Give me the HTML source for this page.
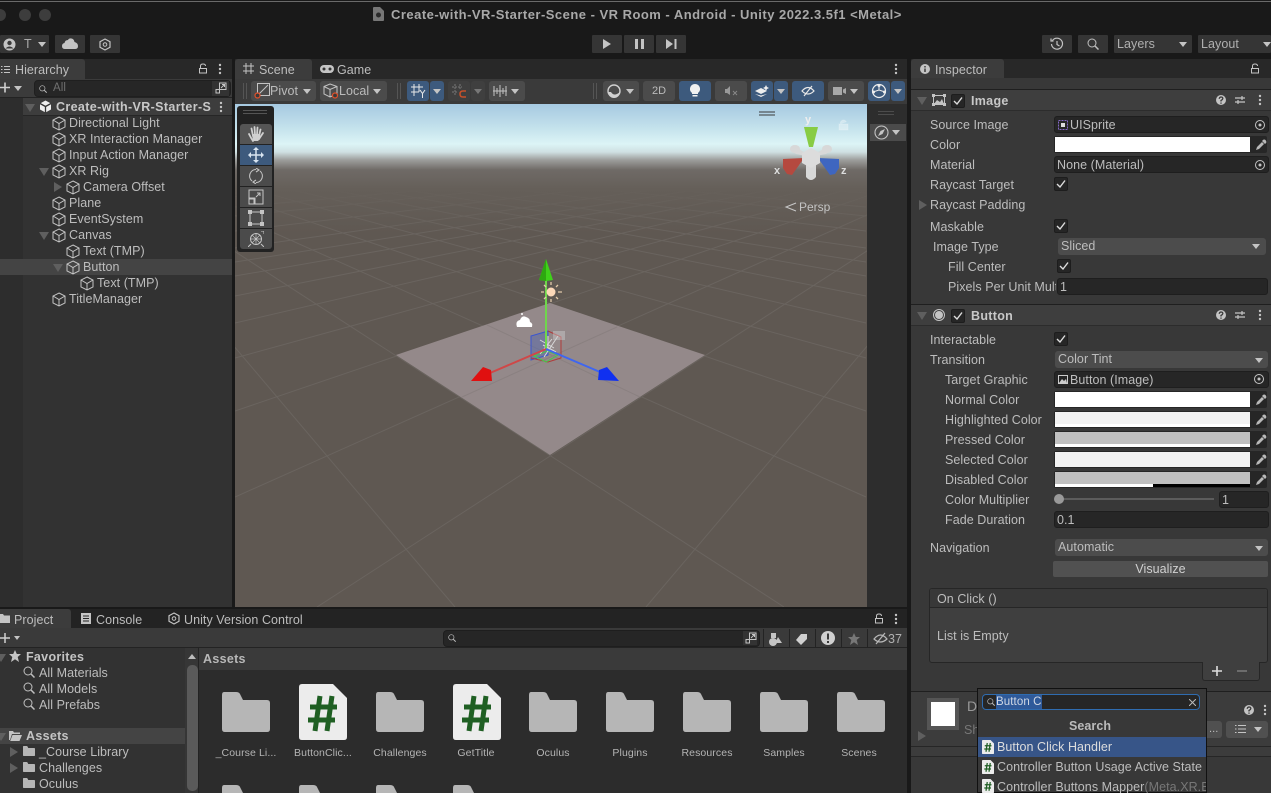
<!DOCTYPE html>
<html><head><meta charset="utf-8"><title>Unity Editor</title>
<style>
html,body{margin:0;padding:0;background:#191919;overflow:hidden;height:793px}
#r{position:relative;width:1271px;height:793px;overflow:hidden;background:#191919;font:12.5px/16px "Liberation Sans",sans-serif;color:#bdbdbd}
#r div,#r svg{position:absolute}
.t{white-space:nowrap;letter-spacing:.06px;height:16px}
.b{font-weight:bold}
.btn{background:#353535;height:18px;top:35px;border-radius:1px}
.tb{background:#4b4b4b;height:20px;top:81px;border-radius:3px}
.bl{background:#3d5a7d;height:20px;top:81px;border-radius:3px}
.f{background:#262626;border:1px solid #1e1e1e;height:15px;border-radius:3px;box-sizing:content-box}
.dd{background:#4c4c4c;height:17px;border-radius:3px}
.c{left:1055px;width:195px;height:14px;background:#fff}
.tri{width:0;height:0;border-left:4px solid transparent;border-right:4px solid transparent;border-top:5px solid #c4c4c4}
.rt{width:0;height:0;border-top:5px solid transparent;border-bottom:5px solid transparent;border-left:8px solid #5f5f5f}
.dn{width:0;height:0;border-left:5px solid transparent;border-right:5px solid transparent;border-top:8px solid #5f5f5f}
.ck{width:12px;height:12px;background:#262626;border:1px solid #1d1d1d;border-radius:2px}
.g line{stroke:#6a645f;stroke-width:1}
.lab{font-size:10.5px;letter-spacing:.1px;text-align:center;width:76px;color:#b4b4b4}
</style></head><body><div id="r">
<svg width="0" height="0" style="left:0;top:0">
<symbol id="cube" viewBox="0 0 14 15"><path d="M7 1L13 4V11L7 14L1 11V4ZM1 4L7 7.5L13 4M7 7.5V14" fill="none" stroke="#c4c4c4" stroke-width="1"/></symbol>
<symbol id="folder" viewBox="0 0 48 40"><path d="M2 0H14Q17 0 18 2L21 8H45Q48 8 48 11V37Q48 40 45 40H3Q0 40 0 37V3Q0 0 2 0Z" fill="#b6b6b6"/></symbol>
<symbol id="cs" viewBox="0 0 48 56"><path d="M3 0H34L48 14V53Q48 56 45 56H3Q0 56 0 53V3Q0 0 3 0Z" fill="#ececec"/><path d="M21 12L16 47M33 12L28 47M11 23H38M9 36H36" stroke="#1f5f23" stroke-width="5" fill="none"/></symbol>
<symbol id="pick" viewBox="0 0 12 12"><path d="M1 11L2 8L7 3L9 5L4 10ZM7 2L8 1Q9 0 10.500 1Q12 3 11 4L10 5Z" fill="#b8b8b8"/></symbol>
<symbol id="tgt" viewBox="0 0 12 12"><circle cx="6" cy="6" r="4.500" fill="none" stroke="#c4c4c4"/><circle cx="6" cy="6" r="1.500" fill="#c4c4c4"/></symbol>
<symbol id="mag" viewBox="0 0 12 12"><circle cx="5" cy="5" r="4" fill="none" stroke="#c0c0c0" stroke-width="1"/><path d="M8 8L11.500 11.500" stroke="#c0c0c0" stroke-width="1.500"/></symbol>
<symbol id="small" viewBox="0 0 12 12"><path d="M4.500 1H11V7.500H4.500ZM1 7.500H4.500V11H1ZM6 6L9.500 2.500M7 2.500H9.500V5" fill="none" stroke="#c4c4c4"/></symbol>
<symbol id="lock" viewBox="0 0 10 11"><path d="M1.500 5.500H8.500V10H1.500ZM2.500 5V3Q2.500 1 5 1Q7.500 1 7.500 3" fill="none" stroke="#c4c4c4"/></symbol>
<symbol id="dots" viewBox="0 0 4 12"><circle cx="2" cy="2" r="1.200" fill="#c4c4c4"/><circle cx="2" cy="6" r="1.200" fill="#c4c4c4"/><circle cx="2" cy="10" r="1.200" fill="#c4c4c4"/></symbol>
<symbol id="help" viewBox="0 0 12 12"><circle cx="6" cy="6" r="5" fill="#c4c4c4"/><path d="M4.200 4.800Q4.500 3 6 3Q8 3 7.800 4.700Q7.500 5.800 6 6.500V7.500M6 8.500V9.800" fill="none" stroke="#383838" stroke-width="1.300"/></symbol>
<symbol id="sl" viewBox="0 0 12 12"><path d="M1 4H11M1 8H11M8 2V6M4 6V10" fill="none" stroke="#c4c4c4" stroke-width="1.200"/></symbol>
</svg>

<!-- title bar -->
<div style="left:0;top:1px;width:1271px;height:1px;background:#6a6a6a"></div>
<div style="left:-6px;top:9px;width:12px;height:12px;border-radius:50%;background:#3d3d3d"></div>
<div style="left:19px;top:9px;width:12px;height:12px;border-radius:50%;background:#3d3d3d"></div>
<div style="left:39px;top:9px;width:12px;height:12px;border-radius:50%;background:#3d3d3d"></div>
<svg style="left:373px;top:7px" width="11" height="14" viewBox="0 0 11 14"><path d="M0 1Q0 0 1 0H7L11 4V13Q11 14 10 14H1Q0 14 0 13Z" fill="#777"/><circle cx="5.500" cy="8" r="2.500" fill="#2a2a2a"/></svg>
<div class="t b" style="left:391px;top:7px;color:#a8a8a8;font-size:13px;letter-spacing:.48px">Create-with-VR-Starter-Scene - VR Room - Android - Unity 2022.3.5f1 &lt;Metal&gt;</div>

<!-- top toolbar -->
<div class="btn" style="left:0;width:49px"></div>
<svg style="left:3px;top:38px" width="13" height="13" viewBox="0 0 13 13"><circle cx="6.500" cy="6.500" r="6" fill="#c4c4c4"/><circle cx="6.500" cy="5" r="2.200" fill="#3a3a3a"/><path d="M2.500 10.500Q6.500 6.500 10.500 10.500" fill="#3a3a3a"/></svg>
<div class="t" style="left:24px;top:36px;color:#aaa">T</div>
<div class="tri" style="left:38px;top:42px"></div>
<div class="btn" style="left:55px;width:30px"></div>
<svg style="left:62px;top:38px" width="16" height="11" viewBox="0 0 16 11"><path d="M3 11Q0 11 0 8Q0 5.500 2.500 5Q3 2 6 2Q7 0 9.500 0.500Q12 1 12.500 4Q16 5 16 8Q16 11 13 11Z" fill="#c4c4c4"/></svg>
<div class="btn" style="left:90px;width:30px"></div>
<svg style="left:99px;top:38px" width="12" height="13" viewBox="0 0 12 13"><path d="M6 1L11 3.700V9.300L6 12L1 9.300V3.700Z" fill="none" stroke="#c4c4c4" stroke-width="1.200"/><circle cx="6" cy="6.500" r="1.800" fill="none" stroke="#c4c4c4"/></svg>

<div class="btn" style="left:592px;width:30px"></div>
<div class="btn" style="left:624px;width:30px"></div>
<div class="btn" style="left:656px;width:30px"></div>
<svg style="left:602px;top:38px" width="10" height="12" viewBox="0 0 10 12"><path d="M1 1L9 6L1 11Z" fill="#c4c4c4"/></svg>
<svg style="left:635px;top:38px" width="9" height="12" viewBox="0 0 9 12"><path d="M0 1H3V11H0ZM6 1H9V11H6Z" fill="#c4c4c4"/></svg>
<svg style="left:666px;top:38px" width="11" height="12" viewBox="0 0 11 12"><path d="M0 1L7 6L0 11ZM8.500 1H10.500V11H8.500Z" fill="#c4c4c4"/></svg>

<div class="btn" style="left:1042px;width:30px"></div>
<svg style="left:1050px;top:37px" width="14" height="14" viewBox="0 0 14 14"><path d="M2.500 3.500A5.500 5.500 0 1 1 1.500 7M1 1.500V4H3.500M7 4V7.500L9.500 9" fill="none" stroke="#c4c4c4" stroke-width="1.200"/></svg>
<div class="btn" style="left:1078px;width:30px"></div>
<svg style="left:1087px;top:38px" width="12" height="12"><use href="#mag"/></svg>
<div class="btn" style="left:1114px;width:78px"></div>
<div class="t" style="left:1117px;top:36px;color:#b0b0b0">Layers</div>
<div class="tri" style="left:1179px;top:42px"></div>
<div class="btn" style="left:1198px;width:73px"></div>
<div class="t" style="left:1201px;top:36px;color:#b0b0b0">Layout</div>
<div class="tri" style="left:1263px;top:42px"></div>

<!-- hierarchy -->
<div style="left:0;top:59px;width:232px;height:548px;background:#323232"></div>
<div style="left:0;top:59px;width:232px;height:20px;background:#282828"></div>
<div style="left:0;top:59px;width:85px;height:20px;background:#3c3c3c;border-radius:0 3px 0 0"></div>
<svg style="left:1px;top:65px" width="9" height="9" viewBox="0 0 9 9"><path d="M0 1.500H1.500M3 1.500H9M0 4.500H1.500M3 4.500H9M0 7.500H1.500M3 7.500H9" stroke="#c4c4c4"/></svg>
<div class="t" style="left:15px;top:62px">Hierarchy</div>
<svg style="left:198px;top:63px" width="10" height="11"><use href="#lock"/></svg>
<svg style="left:218px;top:63px" width="4" height="12"><use href="#dots"/></svg>
<div style="left:0;top:79px;width:232px;height:18px;background:#3b3b3b;border-bottom:1px solid #232323"></div>
<svg style="left:0;top:82px" width="11" height="11" viewBox="0 0 11 11"><path d="M0 5.500H10M5 0.500V10.500" stroke="#d0d0d0" stroke-width="1.600"/></svg>
<div class="tri" style="left:14px;top:86px;border-top-color:#c4c4c4"></div>
<div style="left:34px;top:80px;width:195px;height:15px;background:#262626;border:1px solid #1f1f1f;border-radius:4px"></div>
<svg style="left:39px;top:85px" width="8" height="8"><use href="#mag"/></svg>
<div class="t" style="left:53px;top:80px;color:#6f6f6f;font-size:11.5px">All</div>
<div style="left:212px;top:81px;width:17px;height:15px;background:#333"></div>
<svg style="left:215px;top:82px" width="12" height="12"><use href="#small"/></svg>

<div style="left:0;top:98px;width:23px;height:509px;background:#2d2d2d"></div>
<div style="left:23px;top:98px;width:209px;height:17px;background:#3d3d3d;border-bottom:1px solid #262626"></div>
<div class="dn" style="left:25px;top:104px"></div>
<svg style="left:39px;top:100px" width="13" height="13" viewBox="0 0 13 13"><path d="M6.500 0.500L12 3.500V9.500L6.500 12.500L1 9.500V3.500Z" fill="#eee"/><path d="M6.500 6.500V12.500M6.500 6.500L1 3.500M6.500 6.500L12 3.500" stroke="#333" stroke-width="1.300"/></svg>
<div class="t b" style="left:56px;top:99px;color:#c8c8c8;letter-spacing:.36px">Create-with-VR-Starter-S</div>
<svg style="left:219px;top:101px" width="4" height="12"><use href="#dots"/></svg>

<svg style="left:52px;top:116px" width="14" height="15"><use href="#cube"/></svg><div class="t" style="left:69px;top:115px">Directional Light</div>
<svg style="left:52px;top:132px" width="14" height="15"><use href="#cube"/></svg><div class="t" style="left:69px;top:131px">XR Interaction Manager</div>
<svg style="left:52px;top:148px" width="14" height="15"><use href="#cube"/></svg><div class="t" style="left:69px;top:147px">Input Action Manager</div>
<div class="dn" style="left:39px;top:168px"></div>
<svg style="left:52px;top:164px" width="14" height="15"><use href="#cube"/></svg><div class="t" style="left:69px;top:163px">XR Rig</div>
<div class="rt" style="left:54px;top:182px"></div>
<svg style="left:66px;top:180px" width="14" height="15"><use href="#cube"/></svg><div class="t" style="left:83px;top:179px">Camera Offset</div>
<svg style="left:52px;top:196px" width="14" height="15"><use href="#cube"/></svg><div class="t" style="left:69px;top:195px">Plane</div>
<svg style="left:52px;top:212px" width="14" height="15"><use href="#cube"/></svg><div class="t" style="left:69px;top:211px">EventSystem</div>
<div class="dn" style="left:39px;top:232px"></div>
<svg style="left:52px;top:228px" width="14" height="15"><use href="#cube"/></svg><div class="t" style="left:69px;top:227px">Canvas</div>
<svg style="left:66px;top:244px" width="14" height="15"><use href="#cube"/></svg><div class="t" style="left:83px;top:243px">Text (TMP)</div>
<div style="left:0;top:259px;width:232px;height:16px;background:#444"></div>
<div class="dn" style="left:53px;top:264px"></div>
<svg style="left:66px;top:260px" width="14" height="15"><use href="#cube"/></svg><div class="t" style="left:83px;top:259px">Button</div>
<svg style="left:80px;top:276px" width="14" height="15"><use href="#cube"/></svg><div class="t" style="left:97px;top:275px">Text (TMP)</div>
<svg style="left:52px;top:292px" width="14" height="15"><use href="#cube"/></svg><div class="t" style="left:69px;top:291px">TitleManager</div>

<!-- scene header -->
<div style="left:235px;top:59px;width:672px;height:20px;background:#282828"></div>
<div style="left:235px;top:59px;width:77px;height:20px;background:#3c3c3c;border-radius:3px 3px 0 0"></div>
<svg style="left:243px;top:63px" width="11" height="11" viewBox="0 0 11 11"><path d="M3 0V11M8 0V11M0 3H11M0 8H11" stroke="#c4c4c4"/></svg>
<div class="t" style="left:259px;top:62px">Scene</div>
<svg style="left:320px;top:65px" width="14" height="8" viewBox="0 0 14 8"><rect width="14" height="8" rx="4" fill="#c4c4c4"/><circle cx="4" cy="4" r="1.500" fill="#333"/><circle cx="10" cy="4" r="1.500" fill="#333"/></svg>
<div class="t" style="left:337px;top:62px">Game</div>
<svg style="left:894px;top:63px" width="4" height="12"><use href="#dots"/></svg>
<div style="left:235px;top:79px;width:672px;height:25px;background:#3a3a3a"></div>
<div style="left:243px;top:83px;width:1px;height:16px;background:#555"></div><div style="left:246px;top:83px;width:1px;height:16px;background:#555"></div>
<div class="tb" style="left:251px;width:65px"></div>
<svg style="left:254px;top:83px" width="16" height="16" viewBox="0 0 16 16"><path d="M3.500 0.500H15.500V12.500H3.500ZM5 11L14 2" fill="none" stroke="#c4c4c4"/><circle cx="3.500" cy="12.500" r="2.500" fill="#3a3a3a" stroke="#e0502a" stroke-width="1.200"/></svg>
<div class="t" style="left:270px;top:83px;color:#bbb">Pivot</div>
<div class="tri" style="left:303px;top:89px"></div>
<div class="tb" style="left:320px;width:67px"></div>
<svg style="left:323px;top:83px" width="16" height="16" viewBox="0 0 16 16"><path d="M7 1L14 3.500V11L7 14L1 11V3.500ZM1 3.500L7 6.500L14 3.500M7 6.500V14" fill="none" stroke="#c4c4c4"/><circle cx="12" cy="12.500" r="2.500" fill="#3a3a3a" stroke="#e0502a" stroke-width="1.200"/></svg>
<div class="t" style="left:339px;top:83px;color:#bbb">Local</div>
<div class="tri" style="left:373px;top:89px"></div>
<div style="left:397px;top:83px;width:1px;height:16px;background:#555"></div><div style="left:400px;top:83px;width:1px;height:16px;background:#555"></div>
<div class="bl" style="left:407px;width:22px"></div><div class="bl" style="left:430px;width:14px"></div>
<svg style="left:411px;top:84px" width="15" height="14" viewBox="0 0 15 14"><path d="M3 0V12M8 0V8M0 3H12M0 8H8M9 6L11.500 9.500L14 6M11.500 9.500V14" fill="none" stroke="#e8e8e8"/></svg>
<div class="tri" style="left:433px;top:89px"></div>
<div class="tb" style="left:448px;width:22px;background:#3f3f3f"></div><div class="tb" style="left:471px;width:14px;background:#3f3f3f"></div>
<svg style="left:452px;top:84px" width="15" height="14" viewBox="0 0 15 14"><path d="M3 0V12M8 0V6M0 3H10M0 8H6" fill="none" stroke="#777" stroke-dasharray="2 1"/><path d="M14 7H11Q8 7 8 10Q8 13 11 13H14" fill="none" stroke="#c7502a" stroke-width="1.500"/></svg>
<div class="tri" style="left:474px;top:89px;border-top-color:#777"></div>
<div class="tb" style="left:489px;width:36px"></div>
<svg style="left:493px;top:84px" width="14" height="14" viewBox="0 0 14 14"><path d="M0 7H14M1 2V12M4 4V10M7 1V13M10 4V10M13 2V12" stroke="#c4c4c4" fill="none"/></svg>
<div class="tri" style="left:511px;top:89px"></div>
<div style="left:593px;top:83px;width:1px;height:16px;background:#555"></div><div style="left:596px;top:83px;width:1px;height:16px;background:#555"></div>
<div class="tb" style="left:603px;width:36px"></div>
<svg style="left:607px;top:84px" width="14" height="14" viewBox="0 0 14 14"><circle cx="7" cy="7" r="6" fill="none" stroke="#d0d0d0" stroke-width="1.400"/><path d="M1 8A6 6 0 0 0 13 8Q7 13 4 8Z" fill="#d0d0d0"/></svg>
<div class="tri" style="left:626px;top:89px"></div>
<div class="tb" style="left:643px;width:32px"></div>
<div class="t" style="left:652px;top:83px;font-size:11px;color:#bbb;letter-spacing:0">2D</div>
<div class="bl" style="left:679px;width:32px"></div>
<svg style="left:690px;top:84px" width="10" height="14" viewBox="0 0 10 14"><path d="M5 0A5 5 0 0 1 8 9V10H2V9A5 5 0 0 1 5 0ZM2.500 11H7.500V12.500H2.500Z" fill="#f0f0f0"/></svg>
<div class="tb" style="left:715px;width:32px"></div>
<svg style="left:725px;top:86px" width="13" height="10" viewBox="0 0 13 10"><path d="M0 3H2L5 0V9L2 7H0Z" fill="#999"/><path d="M8 5L12 9M12 5L8 9" stroke="#888"/></svg>
<div class="bl" style="left:751px;width:22px"></div><div class="bl" style="left:774px;width:14px"></div>
<svg style="left:755px;top:85px" width="15" height="12" viewBox="0 0 15 12"><path d="M0 6L6 3L12 6L6 9ZM0 9L6 12L12 9L6 10.500Z" fill="#eee"/><path d="M11 0L12 2L14 3L12 4L11 6L10 4L8 3L10 2Z" fill="#eee"/></svg>
<div class="tri" style="left:777px;top:89px"></div>
<div class="bl" style="left:792px;width:32px"></div>
<svg style="left:801px;top:85px" width="14" height="12" viewBox="0 0 14 12"><path d="M1 6Q7 -1 13 6Q7 12 1 6ZM3 11L11 1" fill="none" stroke="#e8e8e8" stroke-width="1.200"/></svg>
<div class="tb" style="left:828px;width:36px"></div>
<svg style="left:833px;top:86px" width="13" height="10" viewBox="0 0 13 10"><path d="M0 1H9V9H0ZM10 3.500L13 2V8L10 6.500Z" fill="#a8a8a8"/></svg>
<div class="tri" style="left:850px;top:89px"></div>
<div class="bl" style="left:868px;width:22px"></div><div class="bl" style="left:891px;width:14px"></div>
<svg style="left:871px;top:83px" width="16" height="16" viewBox="0 0 16 16"><circle cx="8" cy="8" r="6.500" fill="none" stroke="#eee" stroke-width="1.200"/><path d="M2 9L8 7L14 9M8 2V7" fill="none" stroke="#eee"/><circle cx="8" cy="2.500" r="1.500" fill="#eee"/><circle cx="2.500" cy="9" r="1.500" fill="#eee"/><circle cx="13.500" cy="9" r="1.500" fill="#eee"/></svg>
<div class="tri" style="left:894px;top:89px"></div>

<!-- scene view -->
<div style="left:235px;top:104px;width:632px;height:503px;overflow:hidden;background:#5f5852">
<svg style="left:-235px;top:-104px" width="1271" height="793" viewBox="0 0 1271 793">
<g class="g" id="gg">
<line x1="1046" y1="135" x2="235" y2="193"/><line x1="1046" y1="135" x2="235" y2="207"/><line x1="1046" y1="135" x2="235" y2="216"/><line x1="1046" y1="135" x2="235" y2="231"/><line x1="1046" y1="135" x2="235" y2="248"/><line x1="1046" y1="135" x2="235" y2="262"/><line x1="1046" y1="135" x2="235" y2="276"/><line x1="1046" y1="135" x2="235" y2="296"/><line x1="1046" y1="135" x2="235" y2="323"/><line x1="1046" y1="135" x2="235" y2="358"/><line x1="1046" y1="135" x2="235" y2="411"/><line x1="1046" y1="135" x2="235" y2="497"/><line x1="1046" y1="135" x2="317" y2="607"/><line x1="1046" y1="135" x2="646" y2="607"/>
</g>
<use href="#gg" transform="translate(1101,0) scale(-1,1)"/>
<polygon points="396,355 550,303 705,355 550,455" fill="#94898a"/>
<g stroke="#8a8080" stroke-width="1"><line x1="487" y1="325" x2="640" y2="397"/><line x1="617" y1="327" x2="462" y2="397"/></g>
</svg>
<div style="left:0;top:0;width:632px;height:130px;background:linear-gradient(#a6c9e1 0,#c4e2ec 24px,#dcf4f6 40px,#cfe0e2 48px,#9d9e9c 56px,#6f6a66 66px,#655f59 85px,rgba(95,88,82,0) 130px)"></div>
<svg style="left:-235px;top:-104px" width="1271" height="793" viewBox="0 0 1271 793">
<!-- object wire -->
<path d="M531 336L548 331V355L531 360Z" fill="#4f63b0" fill-opacity=".45" stroke="#3a55d0"/>
<path d="M548 331L561 337V358L548 362L531 358" fill="none" stroke="#b03a3a"/>
<path d="M534 356L547 351L558 355L546 362Z" fill="none" stroke="#46c84a"/>
<path d="M540 340L554 348M544 357L558 336M548 336V350M552 339L540 354M543 345L556 352" stroke="#d8d8d8" fill="none"/>
<rect x="553" y="331" width="12" height="9" fill="#cfcfcf" opacity=".45"/>
<!-- axes -->
<line x1="546" y1="349" x2="546" y2="278" stroke="#6fd64c" stroke-width="2"/>
<line x1="546" y1="349" x2="490" y2="373" stroke="#cf4848" stroke-width="2"/>
<line x1="546" y1="349" x2="600" y2="372" stroke="#3f66f0" stroke-width="2"/>
<polygon points="546,259 553,280 546,281 539,280" fill="#3fd11a"/>
<polygon points="546,259 546,281 539,280" fill="#2ea810"/>
<polygon points="471,381 483,367 491,370 492,381" fill="#e01010"/>
<polygon points="619,381 607,367 599,370 598,380" fill="#1030f0"/>
<!-- sun -->
<circle cx="551" cy="292" r="4.500" fill="#fcd8b8"/>
<g stroke="#e0c8a8" stroke-width="1.300"><path d="M551 282V285M551 299V302M541 292H544M558 292H562M544 285L546 287M556 297L558 299M558 285L556 287M546 297L544 299"/></g>
<!-- cloud -->
<path d="M517 327Q515 321 520 320Q522 315 526 317Q530 318 530 322Q533 323 532 327Z" fill="#fff"/><circle cx="522" cy="314" r="1" fill="#fff"/>
<!-- orientation gizmo -->
<g>
<polygon points="783,159 804,158 792,175 787,174 783,168" fill="#b5493f"/>
<polygon points="839,159 818,158 830,175 835,174 839,168" fill="#3f66c0"/>
<polygon points="804,127 818,127 813,147 809,147" fill="#88cc44"/>
<path d="M811 157L793 145L790 150L796 154ZM811 157L829 145L832 150L826 154ZM806 162L806 177Q811 183 816 177L816 162Z" fill="#d8d8d8"/>
<ellipse cx="795" cy="149" rx="5" ry="4" fill="#d8d8d8"/><ellipse cx="827" cy="149" rx="5" ry="4" fill="#d8d8d8"/>
<polygon points="802,153 811,148 820,153 820,163 811,168 802,163" fill="#dcdcdc"/>
</g>
<text x="805" y="123" fill="#eee" font-family="Liberation Sans" font-weight="bold" font-size="11">y</text>
<text x="774" y="174" fill="#ddd" font-family="Liberation Sans" font-weight="bold" font-size="11">x</text>
<text x="841" y="174" fill="#ddd" font-family="Liberation Sans" font-weight="bold" font-size="11">z</text>
<path d="M839 124H848V130H839ZM840.500 124V122Q843.500 118 846.500 122" fill="#fff" fill-opacity=".35" stroke="#fff" stroke-opacity=".2"/>
<path d="M759 112H775M759 115H775" stroke="#3a3a3a" stroke-width="1"/>
<path d="M796 203L786 207L796 211" fill="none" stroke="#c8c8c8"/>
<text x="799" y="211" fill="#c4c4c4" font-family="Liberation Sans" font-size="12">Persp</text>
</svg>
<!-- tool palette -->
<div style="left:2px;top:2px;width:37px;height:146px;background:#222;border-radius:3px"></div>
<div style="left:8px;top:6px;width:24px;height:1px;background:#555"></div><div style="left:8px;top:9px;width:24px;height:1px;background:#555"></div>
<div style="left:5px;top:20px;width:32px;height:20px;background:#555;border-radius:3px 3px 0 0"></div>
<div style="left:5px;top:41px;width:32px;height:20px;background:#3d5a7d"></div>
<div style="left:5px;top:62px;width:32px;height:20px;background:#4b4b4b"></div>
<div style="left:5px;top:83px;width:32px;height:20px;background:#4b4b4b"></div>
<div style="left:5px;top:104px;width:32px;height:20px;background:#4b4b4b"></div>
<div style="left:5px;top:125px;width:32px;height:20px;background:#4b4b4b;border-radius:0 0 3px 3px"></div>
<svg style="left:13px;top:22px" width="16" height="16" viewBox="0 0 16 16"><path d="M5 15Q3 12 1 8M5 10L3.500 2.500M7 9L6.500 1M9 9L9.500 1.500M11 10L12.500 3.500M11 13L15 7" fill="none" stroke="#d0d0d0" stroke-width="1.800" stroke-linecap="round"/><path d="M4 8H12V13L10 15H5Z" fill="#d0d0d0"/></svg>
<svg style="left:13px;top:43px" width="16" height="16" viewBox="0 0 16 16"><path d="M8 3V13M3 8H13" stroke="#d8e4f0" stroke-width="1.500"/><path d="M8 0L11 3H5ZM8 16L11 13H5ZM0 8L3 5V11ZM16 8L13 5V11Z" fill="#d8e4f0"/></svg>
<svg style="left:13px;top:64px" width="16" height="16" viewBox="0 0 16 16"><path d="M4 13A6.500 6.500 0 0 1 8 1.500M12 3A6.500 6.500 0 0 1 8 14.500M8 0L11 2L8 4M8 12L5 14L8 16" fill="none" stroke="#c4c4c4" stroke-width="1.100"/></svg>
<svg style="left:13px;top:85px" width="16" height="16" viewBox="0 0 16 16"><path d="M1 1H15V15H7V9H1ZM1 10H6V15H1ZM8 8L12 4M9 4H12V7" fill="none" stroke="#c4c4c4" stroke-width="1"/></svg>
<svg style="left:13px;top:106px" width="16" height="16" viewBox="0 0 16 16"><path d="M2 2H14V14H2Z" fill="none" stroke="#c4c4c4"/><path d="M0 0H4V4H0ZM12 0H16V4H12ZM0 12H4V16H0ZM12 12H16V16H12Z" fill="#c4c4c4"/></svg>
<svg style="left:13px;top:127px" width="16" height="16" viewBox="0 0 16 16"><circle cx="8" cy="8" r="5.500" fill="none" stroke="#c4c4c4"/><path d="M8 2V14M2 8H14M4 4L12 12M12 4L4 12" stroke="#c4c4c4" stroke-width=".7"/><path d="M0 16L3 13M16 16L13 13M13 0L16 0L16 3" stroke="#c4c4c4" fill="none"/></svg>
</div>
<!-- scene right strip -->
<div style="left:867px;top:104px;width:40px;height:503px;background:#2d2d2d"></div>
<div style="left:878px;top:111px;width:16px;height:1px;background:#4c4c4c"></div><div style="left:878px;top:114px;width:16px;height:1px;background:#4c4c4c"></div>
<div style="left:870px;top:124px;width:36px;height:17px;background:#4b4b4b"></div>
<svg style="left:874px;top:125px" width="15" height="15" viewBox="0 0 15 15"><circle cx="7.500" cy="7.500" r="6.500" fill="none" stroke="#c4c4c4" stroke-width="1.100"/><path d="M11 4L8.500 9L4 11L6.500 6Z" fill="#c4c4c4"/></svg>
<div class="tri" style="left:892px;top:130px"></div>

<!-- inspector -->
<div style="left:911px;top:59px;width:360px;height:734px;background:#383838"></div>
<div style="left:911px;top:59px;width:360px;height:19px;background:#282828"></div>
<div style="left:911px;top:59px;width:93px;height:19px;background:#3c3c3c;border-radius:3px 3px 0 0"></div>
<svg style="left:920px;top:64px" width="10" height="10" viewBox="0 0 10 10"><circle cx="5" cy="5" r="5" fill="#c4c4c4"/><path d="M5 2V3.500M5 4.500V8" stroke="#3c3c3c" stroke-width="1.500"/></svg>
<div class="t" style="left:935px;top:62px">Inspector</div>
<svg style="left:1250px;top:63px" width="10" height="11"><use href="#lock"/></svg>
<div style="left:911px;top:89px;width:360px;height:1px;background:#1f1f1f"></div>
<div style="left:911px;top:90px;width:360px;height:20px;background:#3e3e3e;border-bottom:1px solid #2c2c2c"></div>
<div class="dn" style="left:917px;top:97px"></div>
<svg style="left:932px;top:94px" width="14" height="12" viewBox="0 0 14 12"><path d="M1.500 1.500H12.500V10.500H1.500Z" fill="none" stroke="#c4c4c4"/><path d="M2 10L5 6L8 8L10 5L12 10Z" fill="#c4c4c4"/><path d="M0 0H3V3H0ZM11 0H14V3H11ZM0 9H3V12H0ZM11 9H14V12H11Z" fill="#c4c4c4"/></svg>
<div class="ck" style="left:951px;top:94px"></div>
<svg style="left:953px;top:96px" width="10" height="9" viewBox="0 0 10 9"><path d="M1 5L4 8L9 1.500" fill="none" stroke="#ddd" stroke-width="1.400"/></svg>
<div class="t b" style="left:971px;top:93px;color:#c8c8c8;letter-spacing:.3px">Image</div>
<svg style="left:1215px;top:94px" width="12" height="12"><use href="#help"/></svg>
<svg style="left:1234px;top:94px" width="12" height="12"><use href="#sl"/></svg>
<svg style="left:1258px;top:94px" width="4" height="12"><use href="#dots"/></svg>

<div class="t" style="left:930px;top:117px">Source Image</div>
<div class="f" style="left:1054px;top:116px;width:213px"></div>
<svg style="left:1058px;top:120px" width="10" height="10" viewBox="0 0 10 10"><rect x=".5" y=".5" width="9" height="9" fill="none" stroke="#8468c8" stroke-dasharray="2 1"/><rect x="3" y="3" width="4" height="4" fill="#ddd"/></svg>
<div class="t" style="left:1070px;top:117px">UISprite</div>
<svg style="left:1254px;top:119px" width="12" height="12"><use href="#tgt"/></svg>
<div class="t" style="left:930px;top:137px">Color</div>
<div style="left:1054px;top:136px;width:213px;height:17px;background:#262626;border-radius:2px"></div>
<div class="c" style="top:137px;height:15px"></div>
<svg style="left:1255px;top:139px" width="12" height="12"><use href="#pick"/></svg>
<div class="t" style="left:930px;top:157px">Material</div>
<div class="f" style="left:1054px;top:156px;width:213px"></div>
<div class="t" style="left:1057px;top:157px">None (Material)</div>
<svg style="left:1254px;top:159px" width="12" height="12"><use href="#tgt"/></svg>
<div class="t" style="left:930px;top:177px">Raycast Target</div>
<div class="ck" style="left:1054px;top:177px"></div>
<svg style="left:1056px;top:179px" width="10" height="9" viewBox="0 0 10 9"><path d="M1 5L4 8L9 1.500" fill="none" stroke="#ddd" stroke-width="1.400"/></svg>
<div class="rt" style="left:919px;top:200px"></div>
<div class="t" style="left:930px;top:197px">Raycast Padding</div>
<div class="t" style="left:930px;top:219px">Maskable</div>
<div class="ck" style="left:1054px;top:219px"></div>
<svg style="left:1056px;top:221px" width="10" height="9" viewBox="0 0 10 9"><path d="M1 5L4 8L9 1.500" fill="none" stroke="#ddd" stroke-width="1.400"/></svg>
<div class="t" style="left:933px;top:239px">Image Type</div>
<div class="dd" style="left:1058px;top:238px;width:208px"></div>
<div class="t" style="left:1061px;top:238px">Sliced</div>
<div class="tri" style="left:1252px;top:244px"></div>
<div class="t" style="left:948px;top:259px">Fill Center</div>
<div class="ck" style="left:1057px;top:259px"></div>
<svg style="left:1059px;top:261px" width="10" height="9" viewBox="0 0 10 9"><path d="M1 5L4 8L9 1.500" fill="none" stroke="#ddd" stroke-width="1.400"/></svg>
<div class="t" style="left:948px;top:279px;width:108px;overflow:hidden">Pixels Per Unit Multiplier</div>
<div class="f" style="left:1057px;top:278px;width:209px"></div>
<div class="t" style="left:1060px;top:279px">1</div>

<div style="left:911px;top:304px;width:360px;height:1px;background:#1f1f1f"></div>
<div style="left:911px;top:305px;width:360px;height:20px;background:#3e3e3e;border-bottom:1px solid #2c2c2c"></div>
<div class="dn" style="left:917px;top:312px"></div>
<svg style="left:933px;top:309px" width="12" height="12" viewBox="0 0 12 12"><circle cx="6" cy="6" r="5.500" fill="none" stroke="#c4c4c4"/><circle cx="6" cy="6" r="4" fill="#c4c4c4"/></svg>
<div class="ck" style="left:951px;top:309px"></div>
<svg style="left:953px;top:311px" width="10" height="9" viewBox="0 0 10 9"><path d="M1 5L4 8L9 1.500" fill="none" stroke="#ddd" stroke-width="1.400"/></svg>
<div class="t b" style="left:971px;top:308px;color:#c8c8c8;letter-spacing:.3px">Button</div>
<svg style="left:1215px;top:309px" width="12" height="12"><use href="#help"/></svg>
<svg style="left:1234px;top:309px" width="12" height="12"><use href="#sl"/></svg>
<svg style="left:1258px;top:309px" width="4" height="12"><use href="#dots"/></svg>

<div class="t" style="left:930px;top:332px">Interactable</div>
<div class="ck" style="left:1054px;top:332px"></div>
<svg style="left:1056px;top:334px" width="10" height="9" viewBox="0 0 10 9"><path d="M1 5L4 8L9 1.500" fill="none" stroke="#ddd" stroke-width="1.400"/></svg>
<div class="t" style="left:930px;top:352px">Transition</div>
<div class="dd" style="left:1055px;top:351px;width:213px"></div>
<div class="t" style="left:1058px;top:351px">Color Tint</div>
<div class="tri" style="left:1255px;top:358px"></div>
<div class="t" style="left:945px;top:372px">Target Graphic</div>
<div class="f" style="left:1054px;top:371px;width:213px"></div>
<svg style="left:1058px;top:375px" width="10" height="9" viewBox="0 0 10 9"><path d="M.5 .5H9.500V8.500H.5Z" fill="none" stroke="#ccc"/><path d="M1 8L4 4L6 6L8 4L9 8Z" fill="#ccc"/></svg>
<div class="t" style="left:1070px;top:372px">Button (Image)</div>
<svg style="left:1253px;top:373px" width="12" height="12"><use href="#tgt"/></svg>

<div class="t" style="left:945px;top:392px">Normal Color</div>
<div style="left:1054px;top:391px;width:213px;height:17px;background:#262626;border-radius:2px"></div>
<div class="c" style="top:392px;height:15px"></div>
<svg style="left:1255px;top:394px" width="12" height="12"><use href="#pick"/></svg>
<div class="t" style="left:945px;top:412px">Highlighted Color</div>
<div style="left:1054px;top:411px;width:213px;height:17px;background:#262626;border-radius:2px"></div>
<div class="c" style="top:412px;height:15px"></div><div class="c" style="top:412px;height:12px;background:#f2f2f2"></div>
<svg style="left:1255px;top:414px" width="12" height="12"><use href="#pick"/></svg>
<div class="t" style="left:945px;top:432px">Pressed Color</div>
<div style="left:1054px;top:431px;width:213px;height:17px;background:#262626;border-radius:2px"></div>
<div class="c" style="top:432px;height:15px"></div><div class="c" style="top:432px;height:12px;background:#c0c0c0"></div>
<svg style="left:1255px;top:434px" width="12" height="12"><use href="#pick"/></svg>
<div class="t" style="left:945px;top:452px">Selected Color</div>
<div style="left:1054px;top:451px;width:213px;height:17px;background:#262626;border-radius:2px"></div>
<div class="c" style="top:452px;height:15px;background:#f2f2f2"></div>
<svg style="left:1255px;top:454px" width="12" height="12"><use href="#pick"/></svg>
<div class="t" style="left:945px;top:472px">Disabled Color</div>
<div style="left:1054px;top:471px;width:213px;height:17px;background:#262626;border-radius:2px"></div>
<div class="c" style="top:472px;height:15px;background:#000"></div><div class="c" style="top:472px;height:15px;width:98px"></div><div class="c" style="top:472px;height:12px;background:#c0c0c0"></div>
<svg style="left:1255px;top:474px" width="12" height="12"><use href="#pick"/></svg>
<div class="t" style="left:945px;top:492px">Color Multiplier</div>
<div style="left:1058px;top:498px;width:156px;height:2px;background:#5c5c5c"></div>
<div style="left:1054px;top:494px;width:10px;height:10px;border-radius:50%;background:#999"></div>
<div class="f" style="left:1219px;top:491px;width:48px"></div>
<div class="t" style="left:1222px;top:492px">1</div>
<div class="t" style="left:945px;top:512px">Fade Duration</div>
<div class="f" style="left:1054px;top:511px;width:213px"></div>
<div class="t" style="left:1057px;top:512px">0.1</div>
<div class="t" style="left:930px;top:540px">Navigation</div>
<div class="dd" style="left:1055px;top:539px;width:213px"></div>
<div class="t" style="left:1058px;top:539px">Automatic</div>
<div class="tri" style="left:1255px;top:546px"></div>
<div style="left:1053px;top:561px;width:215px;height:16px;background:#515151;border-radius:2px"></div>
<div class="t" style="left:1053px;top:561px;width:215px;text-align:center;color:#d0d0d0">Visualize</div>

<div style="left:929px;top:588px;width:337px;height:73px;background:#3f3f3f;border:1px solid #262626;border-radius:3px"></div>
<div style="left:930px;top:589px;width:337px;height:18px;background:#383838;border-bottom:1px solid #262626;border-radius:3px 3px 0 0"></div>
<div class="t" style="left:937px;top:591px">On Click ()</div>
<div class="t" style="left:937px;top:628px">List is Empty</div>
<div style="left:1202px;top:662px;width:56px;height:18px;background:#3f3f3f;border:1px solid #262626;border-top:0;border-radius:0 0 3px 3px"></div>
<svg style="left:1212px;top:666px" width="10" height="10" viewBox="0 0 10 10"><path d="M0 5H10M5 0V10" stroke="#ddd" stroke-width="1.600"/></svg>
<svg style="left:1237px;top:666px" width="10" height="10" viewBox="0 0 10 10"><path d="M0 5H10" stroke="#777" stroke-width="1.600"/></svg>

<div style="left:911px;top:691px;width:360px;height:1px;background:#1f1f1f"></div>
<div style="left:911px;top:692px;width:360px;height:64px;background:#3c3c3c"></div>
<div style="left:927px;top:698px;width:32px;height:32px;background:#555"></div>
<div style="left:931px;top:702px;width:24px;height:24px;background:#fff"></div>
<div class="t" style="left:967px;top:698px;color:#999;font-size:14px">D</div>
<div class="rt" style="left:918px;top:731px"></div>
<div class="t" style="left:964px;top:722px;color:#777">Sh</div>
<svg style="left:1243px;top:704px" width="12" height="12"><use href="#help"/></svg>
<svg style="left:1263px;top:704px" width="4" height="12"><use href="#dots"/></svg>
<div style="left:1200px;top:721px;width:22px;height:17px;background:#505050;border-radius:3px"></div>
<div class="t" style="left:1209px;top:721px;font-size:11px">...</div>
<div style="left:1226px;top:721px;width:42px;height:17px;background:#505050;border-radius:3px"></div>
<svg style="left:1235px;top:724px" width="11" height="10" viewBox="0 0 11 10"><path d="M3 1.500H11M3 5H11M3 8.500H11M0 1.500H1.500M0 5H1.500M0 8.500H1.500" stroke="#c4c4c4"/></svg>
<div class="tri" style="left:1254px;top:727px"></div>
<div style="left:911px;top:746px;width:360px;height:1px;background:#262626"></div>
<div style="left:911px;top:756px;width:360px;height:1px;background:#262626"></div>
<div style="left:911px;top:757px;width:360px;height:36px;background:#383838"></div>

<!-- project -->
<div style="left:0;top:609px;width:907px;height:184px;background:#2c2c2c"></div>
<div style="left:0;top:609px;width:907px;height:19px;background:#232323"></div>
<div style="left:0;top:609px;width:71px;height:19px;background:#3c3c3c;border-radius:0 3px 0 0"></div>
<svg style="left:0;top:613px" width="10" height="10" viewBox="0 0 10 10"><path d="M0 1H3L4 2.500H10V10H0Z" fill="#c4c4c4"/></svg>
<div class="t" style="left:14px;top:612px">Project</div>
<svg style="left:81px;top:613px" width="10" height="11" viewBox="0 0 10 11"><path d="M0 0H10V11H0Z" fill="#c4c4c4"/><path d="M2 3H8M2 5.500H8M2 8H8" stroke="#232323"/></svg>
<div class="t" style="left:96px;top:612px">Console</div>
<svg style="left:168px;top:612px" width="12" height="13" viewBox="0 0 12 13"><path d="M6 1L11 3.700V9.300L6 12L1 9.300V3.700Z" fill="none" stroke="#c4c4c4" stroke-width="1.200"/><circle cx="6" cy="6.500" r="1.800" fill="none" stroke="#c4c4c4"/></svg>
<div class="t" style="left:184px;top:612px">Unity Version Control</div>
<svg style="left:874px;top:613px" width="10" height="11"><use href="#lock"/></svg>
<svg style="left:894px;top:613px" width="4" height="12"><use href="#dots"/></svg>
<div style="left:0;top:628px;width:907px;height:20px;background:#3a3a3a;border-bottom:1px solid #232323;box-sizing:border-box"></div>
<svg style="left:0;top:633px" width="10" height="10" viewBox="0 0 10 10"><path d="M0 5H10M5 0V10" stroke="#d0d0d0" stroke-width="1.500"/></svg>
<div class="tri" style="left:14px;top:636px;border-left-width:3px;border-right-width:3px;border-top-width:4px"></div>
<div style="left:443px;top:630px;width:315px;height:15px;background:#262626;border:1px solid #1e1e1e;border-radius:4px"></div>
<svg style="left:448px;top:634px" width="8" height="8"><use href="#mag"/></svg>
<div style="left:743px;top:631px;width:14px;height:14px;background:#333"></div>
<svg style="left:745px;top:632px" width="12" height="12"><use href="#small"/></svg>
<div style="left:763px;top:629px;width:1px;height:18px;background:#232323"></div>
<svg style="left:769px;top:633px" width="13" height="13" viewBox="0 0 13 13"><path d="M2 0H7V5H2Z" fill="#c4c4c4"/><circle cx="4" cy="9" r="4" fill="#c4c4c4"/><path d="M9 4L13 10H6Z" fill="#c4c4c4"/></svg>
<div style="left:789px;top:629px;width:1px;height:18px;background:#232323"></div>
<svg style="left:795px;top:633px" width="12" height="12" viewBox="0 0 12 12"><path d="M6 1H12V6L6 12L1 7Z" fill="#d0d0d0"/></svg>
<div style="left:815px;top:629px;width:1px;height:18px;background:#232323"></div>
<svg style="left:821px;top:631px" width="14" height="14" viewBox="0 0 14 14"><circle cx="7" cy="7" r="7" fill="#d0d0d0"/><path d="M7 2.500V8.500M7 10V12" stroke="#3a3a3a" stroke-width="2"/></svg>
<div style="left:841px;top:629px;width:1px;height:18px;background:#232323"></div>
<svg style="left:848px;top:633px" width="12" height="12" viewBox="0 0 12 12"><path d="M6 0L7.800 4H12L8.700 7L10 12L6 9.300L2 12L3.300 7L0 4H4.200Z" fill="#777"/></svg>
<div style="left:867px;top:629px;width:1px;height:18px;background:#232323"></div>
<svg style="left:873px;top:632px" width="15" height="13" viewBox="0 0 15 13"><path d="M1 7Q7.500 -1 14 7Q7.500 13 1 7ZM3 12L12 1" fill="none" stroke="#b8b8b8" stroke-width="1.200"/></svg>
<div class="t" style="left:888px;top:631px;color:#b0b0b0;letter-spacing:0">37</div>

<!-- project tree -->
<div style="left:0;top:648px;width:198px;height:145px;background:#323232"></div>
<div class="dn" style="left:-4px;top:654px"></div>
<svg style="left:9px;top:650px" width="12" height="12" viewBox="0 0 12 12"><path d="M6 0L7.800 4H12L8.700 7L10 12L6 9.300L2 12L3.300 7L0 4H4.200Z" fill="#c4c4c4"/></svg>
<div class="t b" style="left:26px;top:649px;color:#c4c4c4;letter-spacing:.3px">Favorites</div>
<svg style="left:23px;top:666px" width="12" height="12"><use href="#mag"/></svg><div class="t" style="left:39px;top:665px">All Materials</div>
<svg style="left:23px;top:682px" width="12" height="12"><use href="#mag"/></svg><div class="t" style="left:39px;top:681px">All Models</div>
<svg style="left:23px;top:698px" width="12" height="12"><use href="#mag"/></svg><div class="t" style="left:39px;top:697px">All Prefabs</div>
<div style="left:0;top:728px;width:185px;height:16px;background:#444"></div>
<div class="dn" style="left:-4px;top:733px"></div>
<svg style="left:9px;top:730px" width="13" height="11" viewBox="0 0 13 11"><path d="M0 1H4L5 2.500H11V4H3L1 10H0Z" fill="#c4c4c4"/><path d="M3.500 5H13L10.500 11H1.200Z" fill="#c4c4c4"/></svg>
<div class="t b" style="left:26px;top:728px;color:#c4c4c4;letter-spacing:.3px">Assets</div>
<div class="rt" style="left:10px;top:747px"></div>
<svg style="left:23px;top:746px" width="12" height="10" viewBox="0 0 48 40"><use href="#folder"/></svg><div class="t" style="left:39px;top:744px">_Course Library</div>
<div class="rt" style="left:10px;top:763px"></div>
<svg style="left:23px;top:762px" width="12" height="10" viewBox="0 0 48 40"><use href="#folder"/></svg><div class="t" style="left:39px;top:760px">Challenges</div>
<svg style="left:23px;top:778px" width="12" height="10" viewBox="0 0 48 40"><use href="#folder"/></svg><div class="t" style="left:39px;top:776px">Oculus</div>
<div style="left:185px;top:648px;width:13px;height:145px;background:#363636"></div>
<div style="left:188px;top:654px;border-left:4px solid transparent;border-right:4px solid transparent;border-bottom:5px solid #bbb;width:0;height:0"></div>
<div style="left:187px;top:665px;width:11px;height:126px;background:#5a5a5a;border-radius:5px"></div>

<!-- assets grid -->
<div style="left:198px;top:648px;width:709px;height:22px;background:#3a3a3a"></div>
<div style="left:198px;top:648px;width:1px;height:145px;background:#232323"></div>
<div class="t b" style="left:203px;top:651px;color:#b8b8b8;letter-spacing:.3px">Assets</div>
<svg style="left:222px;top:692px" width="48" height="40"><use href="#folder"/></svg>
<svg style="left:299px;top:684px" width="48" height="56"><use href="#cs"/></svg>
<svg style="left:376px;top:692px" width="48" height="40"><use href="#folder"/></svg>
<svg style="left:453px;top:684px" width="48" height="56"><use href="#cs"/></svg>
<svg style="left:529px;top:692px" width="48" height="40"><use href="#folder"/></svg>
<svg style="left:606px;top:692px" width="48" height="40"><use href="#folder"/></svg>
<svg style="left:683px;top:692px" width="48" height="40"><use href="#folder"/></svg>
<svg style="left:760px;top:692px" width="48" height="40"><use href="#folder"/></svg>
<svg style="left:837px;top:692px" width="48" height="40"><use href="#folder"/></svg>
<div class="t lab" style="left:208px;top:745px">_Course Li...</div>
<div class="t lab" style="left:285px;top:745px">ButtonClic...</div>
<div class="t lab" style="left:362px;top:745px">Challenges</div>
<div class="t lab" style="left:438px;top:745px">GetTitle</div>
<div class="t lab" style="left:515px;top:745px">Oculus</div>
<div class="t lab" style="left:592px;top:745px">Plugins</div>
<div class="t lab" style="left:669px;top:745px">Resources</div>
<div class="t lab" style="left:746px;top:745px">Samples</div>
<div class="t lab" style="left:821px;top:745px">Scenes</div>
<svg style="left:222px;top:785px" width="48" height="8" viewBox="0 0 48 8"><path d="M2 0H14Q17 0 18 2L21 8H0V3Q0 0 2 0Z" fill="#b6b6b6"/></svg>
<svg style="left:299px;top:785px" width="48" height="8" viewBox="0 0 48 8"><path d="M2 0H14Q17 0 18 2L21 8H0V3Q0 0 2 0Z" fill="#b6b6b6"/></svg>
<svg style="left:376px;top:785px" width="48" height="8" viewBox="0 0 48 8"><path d="M2 0H14Q17 0 18 2L21 8H0V3Q0 0 2 0Z" fill="#b6b6b6"/></svg>
<svg style="left:453px;top:785px" width="48" height="8" viewBox="0 0 48 8"><path d="M2 0H14Q17 0 18 2L21 8H0V3Q0 0 2 0Z" fill="#b6b6b6"/></svg>

<!-- popup -->
<div style="left:977px;top:688px;width:230px;height:105px;background:#383838;border:1px solid #111;box-sizing:border-box"></div>
<div style="left:982px;top:694px;width:216px;height:14px;background:#262626;border:1px solid #2f6cb0;border-radius:4px"></div>
<svg style="left:987px;top:698px" width="8" height="8"><use href="#mag"/></svg>
<div style="left:996px;top:695px;width:46px;height:14px;background:#2f5a9a"></div>
<div class="t" style="left:996px;top:694px;font-size:11.5px;letter-spacing:.1px;color:#d0d8e4">Button C</div>
<svg style="left:1189px;top:699px" width="7" height="7" viewBox="0 0 7 7"><path d="M0 0L7 7M7 0L0 7" stroke="#bbb"/></svg>
<div class="t b" style="left:976px;top:718px;width:228px;text-align:center;color:#bbb">Search</div>
<div style="left:978px;top:737px;width:228px;height:20px;background:#375588"></div>
<svg style="left:982px;top:740px" width="12" height="14" viewBox="0 0 48 56"><use href="#cs"/></svg>
<div class="t" style="left:997px;top:739px;color:#dcdcdc">Button Click Handler</div>
<svg style="left:982px;top:760px" width="12" height="14" viewBox="0 0 48 56"><use href="#cs"/></svg>
<div class="t" style="left:997px;top:759px;width:209px;overflow:hidden">Controller Button Usage Active State (Meta)</div>
<svg style="left:982px;top:779px" width="12" height="14" viewBox="0 0 48 56"><use href="#cs"/></svg>
<div class="t" style="left:997px;top:779px;width:209px;height:14px;overflow:hidden">Controller Buttons Mapper<span style="color:#777">(Meta.XR.BuildingBlocks)</span></div>
</div></body></html>
